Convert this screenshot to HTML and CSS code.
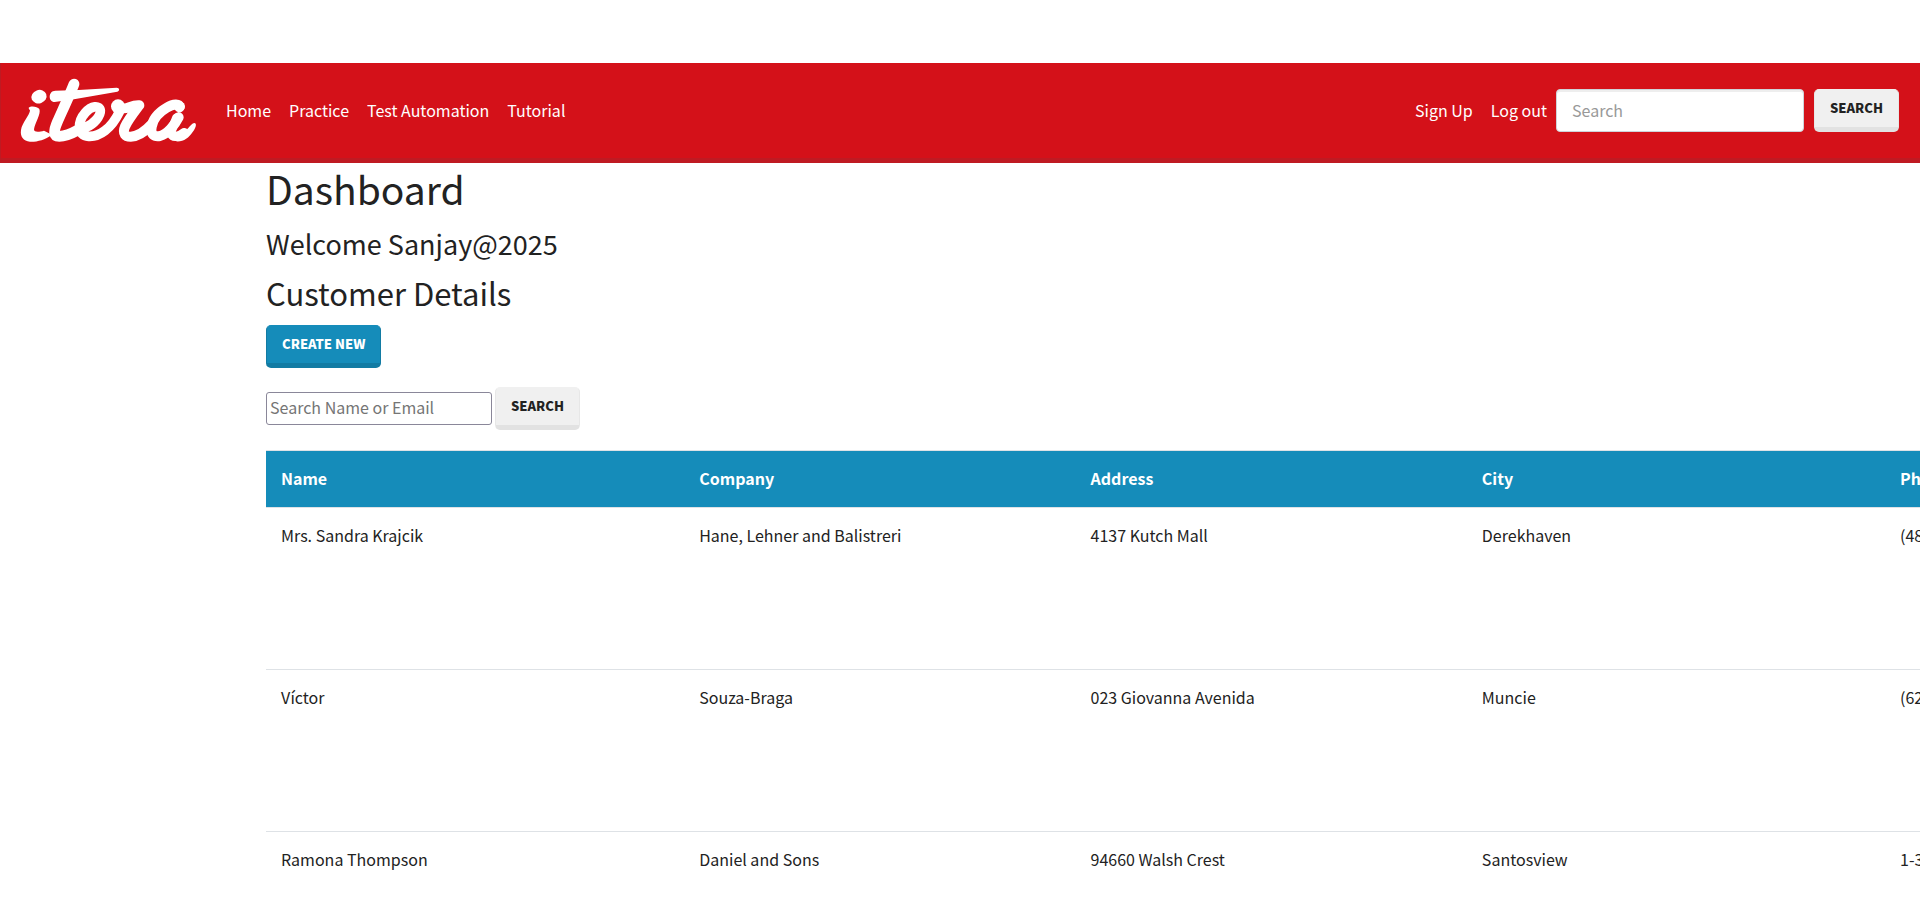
FILE: index.html
```html
<!DOCTYPE html>
<html lang="en">
<head>
<meta charset="utf-8">
<title>Dashboard</title>
<link rel="stylesheet" href="styles.css">
</head>
<body>
<header class="navbar">
  <a class="brand" href="#" aria-label="itera">
    <svg class="logo" viewBox="60 70 531 195" fill="none" stroke="#fff" stroke-linecap="round" stroke-linejoin="round">
      <ellipse cx="117" cy="126" rx="23" ry="20" fill="#fff" stroke="none" transform="rotate(-20 117 126)"/>
      <path fill="#fff" stroke="none" d="M86 159C92 153 112 155 118 163C124 178 105 204 102 224C102 234 118 232 132 228L156 240C134 256 110 262 90 261C70 259 60 246 63 226C66 204 88 182 90 168C90 165 86 163 86 159Z"/>
      <path stroke-width="32" d="M222 88C212 114 188 166 172 202C160 230 160 245 178 245C196 245 216 236 234 226"/>
      <path fill="#fff" stroke="none" d="M166 108L236 106L350 99C359 99 360 108 352 111L222 134L164 142C144 142 144 108 166 108Z"/>
      <path stroke-width="29" d="M258 218C282 208 302 184 301 168C299 150 274 153 256 174C232 201 230 243 266 245C298 247 334 222 358 172"/>
      <circle cx="354" cy="155" r="21" fill="#fff" stroke="none"/>
      <path stroke-width="30" d="M360 161C382 166 392 150 418 152C406 168 384 196 375 216C366 237 376 246 392 246C412 245 434 232 456 208"/>
      <path stroke-width="30" d="M538 158C540 146 520 147 500 159C476 173 458 194 455 217C451 239 462 247 480 244C502 238 524 212 536 188"/>
      <circle cx="541" cy="156" r="14" fill="#fff" stroke="none"/>
      <path stroke-width="28" d="M530 190C526 206 510 226 514 238C520 250 536 246 552 234"/>
      <path fill="#fff" stroke="none" d="M540 242C562 230 570 207 583 205C592 206 587 220 578 232C566 250 550 262 528 260Z"/>
    </svg>
  </a>
  <nav class="links">
    <a href="#">Home</a>
    <a href="#">Practice</a>
    <a href="#">Test Automation</a>
    <a href="#">Tutorial</a>
  </nav>
  <nav class="links links-user">
    <a href="#">Sign Up</a>
    <a href="#">Log out</a>
  </nav>
  <form class="nav-search">
    <input class="field" type="text" placeholder="Search" aria-label="Search">
    <button class="btn btn-light" type="submit">SEARCH</button>
  </form>
</header>
<main class="content">
  <h1>Dashboard</h1>
  <h3>Welcome Sanjay@2025</h3>
  <h2>Customer Details</h2>
  <button class="btn btn-primary" type="button">CREATE NEW</button>
  <form class="filter">
    <input class="filter-field" type="text" placeholder="Search Name or Email" aria-label="Search Name or Email">
    <button class="btn btn-light" type="submit">SEARCH</button>
  </form>
  <table class="customers">
    <colgroup><col class="wide"><col class="mid"><col class="mid"><col class="wide"><col></colgroup>
    <thead>
      <tr><th>Name</th><th>Company</th><th>Address</th><th>City</th><th>Phone</th></tr>
    </thead>
    <tbody>
      <tr><td>Mrs. Sandra Krajcik</td><td>Hane, Lehner and Balistreri</td><td>4137 Kutch Mall</td><td>Derekhaven</td><td>(48</td></tr>
      <tr><td>Víctor</td><td>Souza-Braga</td><td>023 Giovanna Avenida</td><td>Muncie</td><td>(62</td></tr>
      <tr><td>Ramona Thompson</td><td>Daniel and Sons</td><td>94660 Walsh Crest</td><td>Santosview</td><td>1-3</td></tr>
    </tbody>
  </table>
</main>
</body>
</html>
```

FILE: styles.css
```css
* { box-sizing: border-box; }

body {
  margin: 0;
  padding-top: 63px;
  height: 100vh;
  overflow: hidden;
  background: #fff;
  color: #222;
  font: 16px/26px "Noto Sans CJK SC", "Noto Sans", sans-serif;
}

input, button { font: inherit; }

.navbar {
  display: flex;
  align-items: center;
  height: 100px;
  padding: 0 21px 0 19px;
  background: #d41119;
  border: solid #bf1a22;
  border-width: 0 0 5px 1px;
}
.brand { display: flex; margin-right: 20px; }
.logo { width: 177px; height: 65px; }

.links { display: flex; }
.links a {
  padding: 6px 9px 8px;
  color: #fff;
  text-decoration: none;
}
.links-user { margin-left: auto; }

.nav-search { display: flex; gap: 10px; }
.field {
  width: 248px;
  height: 43px;
  padding: 0 15px 2px;
  border: 1px solid #ced4da;
  border-radius: 4px;
  box-shadow: inset 0 2px 0 #eee;
  background: #fff;
}
.field::placeholder { color: #999; opacity: 1; }

.btn {
  height: 43px;
  padding: 0 15px 2px;
  border: 1px solid;
  border-bottom-width: 5px;
  border-radius: 5px;
  font-size: 13px;
  font-weight: 900;
  line-height: 20px;
}
.btn-light { background: #f0f0f0; border-color: #f0f0f0 #e7e7e7 #e2e2e2; color: #222; }
.btn-primary { background: #158cba; border-color: #158cba #127ba3 #127ba3; color: #fff; }

.content { padding-left: 266px; }

h1, h2, h3 { margin: 0 0 9px; font-weight: 400; }
h1 { margin-bottom: 11px; font-size: 39px; line-height: 51px; }
h2 { margin-bottom: 11px; font-size: 31px; line-height: 43px; }
h3 { font-size: 27px; line-height: 37px; }

.filter { display: flex; align-items: center; gap: 3px; margin: 19px 0 20px; }
.filter-field {
  width: 226px;
  height: 33px;
  padding: 0 3px 3px;
  border: 1px solid #8a8799;
  border-radius: 3px;
}
.filter-field::placeholder { color: #757575; opacity: 1; }

.customers {
  width: 123.1%;
  table-layout: fixed;
  border-collapse: collapse;
}
.wide { width: 20.54%; }
.mid { width: 19.22%; }
.customers th, .customers td {
  padding: 14px 15px 16px;
  border-top: 1px solid #dee2e6;
  text-align: left;
  vertical-align: top;
}
.customers th { background: #158cba; color: #fff; font-weight: 700; }
.customers td { height: 162px; }
```
